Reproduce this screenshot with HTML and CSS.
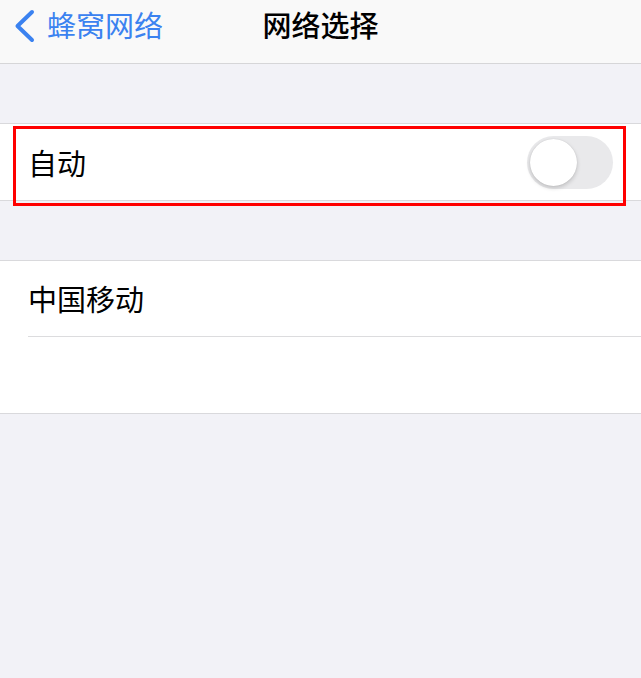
FILE: index.html
```html
<!DOCTYPE html>
<html lang="zh-CN">
<head>
<meta charset="utf-8">
<link rel="stylesheet" href="styles.css">
</head>
<body>
<div class="nav">
  <div class="back">
    <svg class="chev" width="22" height="34" viewBox="0 0 22 34"><path d="M19 3 L4.5 17 L19 31" fill="none" stroke="#3b82f0" stroke-width="4" stroke-linecap="round" stroke-linejoin="round"/></svg>
    <span class="back-text">蜂窝网络</span>
  </div>
  <div class="title">网络选择</div>
  <div></div>
</div>
<div class="gap"></div>
<div class="section">
  <div class="row">
    <span class="label">自动</span>
    <div class="toggle"><div class="knob"></div></div>
  </div>
</div>
<div class="gap"></div>
<div class="section">
  <div class="row sep"><span class="label">中国移动</span></div>
  <div class="row"></div>
</div>
<div class="highlight"></div>
</body>
</html>
```
FILE: styles.css
```css
html, body {
  margin: 0;
  padding: 0;
  background: #f2f2f7;
  font-family: "Noto Sans CJK SC", "Noto Sans", sans-serif;
  height: 678px;
  overflow: hidden;
}
.nav {
  height: 49px;
  padding-bottom: 14px;
  background: #f9f9f9;
  border-bottom: 1px solid #d6d6d8;
  display: grid;
  grid-template-columns: 1fr auto 1fr;
  align-items: center;
}
.back {
  display: flex;
  align-items: center;
  padding-left: 13px;
  gap: 12px;
  color: #3b82f0;
}
.back-text {
  font-size: 29px;
  line-height: 1;
}
.chev { margin-top: 3px; }
.title {
  font-size: 29px;
  font-weight: 500;
  color: #000;
  line-height: 1;
}
.gap { height: 59px; }
.section {
  background: #fff;
  border-top: 1px solid #d9d9dc;
  border-bottom: 1px solid #d9d9dc;
}
.row {
  height: 76px;
  display: flex;
  align-items: center;
  justify-content: space-between;
  margin-left: 28px;
  padding-right: 28px;
  box-sizing: border-box;
}
.row.sep {
  border-bottom: 1px solid #dcdcde;
}
.label {
  font-size: 29px;
  color: #000;
  line-height: 1;
}
.toggle {
  width: 86px;
  height: 53px;
  border-radius: 27px;
  background: #e9e9eb;
  position: relative;
}
.knob {
  position: absolute;
  left: 3px;
  top: 3px;
  width: 47px;
  height: 47px;
  border-radius: 50%;
  background: #fff;
  box-shadow: 0 2px 4px rgba(0,0,0,0.18), 0 0 1px rgba(0,0,0,0.15);
}
.highlight {
  position: absolute;
  left: 13px;
  top: 126px;
  width: 613px;
  height: 80px;
  border: 3px solid #ff0000;
  box-sizing: border-box;
  pointer-events: none;
}
```
